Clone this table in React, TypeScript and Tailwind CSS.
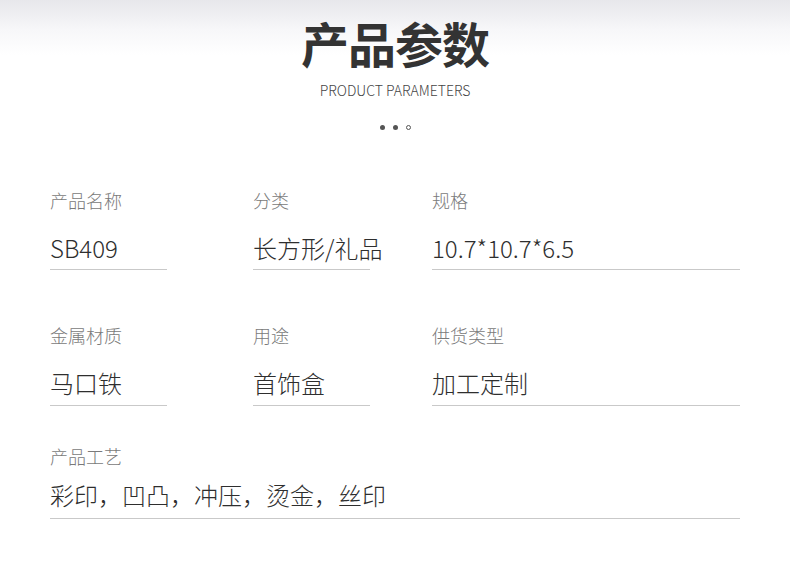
import React from 'react';

const Field = ({ label, value, lineClass, gapClass = 'mt-[20px]', padClass = 'pb-[5px]' }: { label: string; value: string; lineClass: string; gapClass?: string; padClass?: string }) => (
  <div className={lineClass}>
    <div className="text-[18px] leading-[24px] font-light text-[#7a7a7a]">{label}</div>
    <div className={`${gapClass} ${padClass} text-[24px] leading-[32px] font-light text-[#2e2e2e] border-b border-[#c9c9c9] whitespace-nowrap`}>
      {value}
    </div>
  </div>
);

export default function App() {
  return (
    <div
      className="w-[790px] h-[577px] overflow-hidden bg-[linear-gradient(to_bottom,#e7e7eb_0px,#f7f7f9_30px,#ffffff_55px)]"
      style={{ fontFamily: '"Noto Sans CJK SC", "Noto Sans", sans-serif' }}
    >
      {/* Header */}
      <div className="flex flex-col items-center pt-[18px]">
        <h1 className="text-[48px] leading-[48px] font-bold text-[#333333] tracking-[-1px]">产品参数</h1>
        <div className="mt-[14px] text-[14px] leading-[20px] font-light text-[#444444]">PRODUCT PARAMETERS</div>
        <div className="mt-[24px] flex items-center gap-[8px] h-[6px]">
          <span className="w-[5px] h-[5px] rounded-full bg-[#555555]" />
          <span className="w-[5px] h-[5px] rounded-full bg-[#555555]" />
          <span className="w-[5px] h-[5px] rounded-full border border-[#555555]" />
        </div>
      </div>

      {/* Parameters */}
      <div className="px-[50px]">
        <div className="mt-[58px] grid grid-cols-[203px_179px_308px]">
          <Field label="产品名称" value="SB409" lineClass="w-[117px]" />
          <Field label="分类" value="长方形/礼品" lineClass="w-[117px]" />
          <Field label="规格" value="10.7*10.7*6.5" lineClass="w-[308px]" />
        </div>
        <div className="mt-[53px] grid grid-cols-[203px_179px_308px]">
          <Field label="金属材质" value="马口铁" lineClass="w-[117px]" padClass="pb-[6px]" />
          <Field label="用途" value="首饰盒" lineClass="w-[117px]" padClass="pb-[6px]" />
          <Field label="供货类型" value="加工定制" lineClass="w-[308px]" padClass="pb-[6px]" />
        </div>
        <div className="mt-[38px]">
          <Field label="产品工艺" value="彩印，凹凸，冲压，烫金，丝印" lineClass="w-[690px]" gapClass="mt-[11px]" padClass="pb-[7px]" />
        </div>
      </div>
    </div>
  );
}
